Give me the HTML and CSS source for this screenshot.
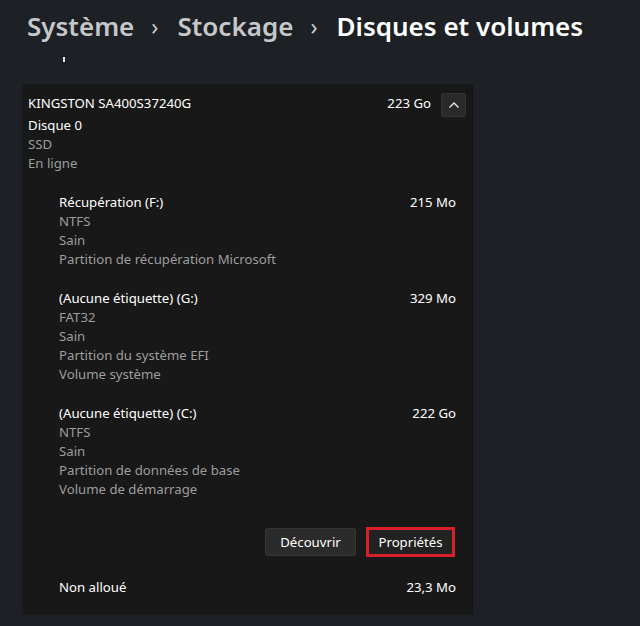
FILE: index.html
```html
<!DOCTYPE html>
<html lang="fr">
<head>
    <meta charset="UTF-8">
    <title>Disques et volumes</title>
    <link rel="stylesheet" href="styles.css">
</head>
<body>
<div class="crumbs">
    <span class="crumb">Système</span>
    <span class="sep">&#8250;</span>
    <span class="crumb">Stockage</span>
    <span class="sep">&#8250;</span>
    <span class="crumb current">Disques et volumes</span>
</div>
<div class="scroll-edge"><span class="tick"></span></div>

<div class="disk">
    <div class="disk-head">
        <span class="name">KINGSTON SA400S37240G</span>
        <span class="size">223 Go</span>
        <button class="toggle" aria-label="Réduire">
            <svg width="12" height="8" viewBox="0 0 12 8"><path d="M1.5 6.5 L6 2 L10.5 6.5" fill="none" stroke="#e8e8e8" stroke-width="1.4"/></svg>
        </button>
    </div>
    <div class="line strong">Disque 0</div>
    <div class="line muted">SSD</div>
    <div class="line muted">En ligne</div>

    <div class="volume">
        <div class="vol-head"><span>Récupération (F:)</span><span>215 Mo</span></div>
        <div class="line muted">NTFS</div>
        <div class="line muted">Sain</div>
        <div class="line muted">Partition de récupération Microsoft</div>
    </div>

    <div class="volume">
        <div class="vol-head"><span>(Aucune étiquette) (G:)</span><span>329 Mo</span></div>
        <div class="line muted">FAT32</div>
        <div class="line muted">Sain</div>
        <div class="line muted">Partition du système EFI</div>
        <div class="line muted">Volume système</div>
    </div>

    <div class="volume">
        <div class="vol-head"><span>(Aucune étiquette) (C:)</span><span>222 Go</span></div>
        <div class="line muted">NTFS</div>
        <div class="line muted">Sain</div>
        <div class="line muted">Partition de données de base</div>
        <div class="line muted">Volume de démarrage</div>
    </div>

    <div class="actions">
        <button class="btn">Découvrir</button>
        <button class="btn marked">Propriétés</button>
    </div>

    <div class="volume last">
        <div class="vol-head"><span>Non alloué</span><span>23,3 Mo</span></div>
    </div>
</div>
</body>
</html>
```

FILE: styles.css
```css
body {
    margin: 0;
    background-color: #1d2125;
    font-family: "Noto Sans", "Open Sans", sans-serif;
    font-size: 13.2px;
    color: #ffffff;
    overflow: hidden;
}

.crumbs {
    display: flex;
    align-items: center;
    padding: 6px 0 0 27px;
    height: 40px;
    font-size: 26px;
    font-weight: 600;
    color: #c5c7c9;
}

.sep {
    font-size: 23px;
    font-weight: 400;
    margin: 0 19px 0 17px;
    color: #c5c7c9;
}

.current {
    color: #ffffff;
}

.scroll-edge {
    height: 27px;
    padding: 11px 0 0 63px;
}

.tick {
    display: block;
    width: 2px;
    height: 5px;
    background-color: #e8e8e8;
}

.disk {
    margin-left: 22px;
    width: 438px;
    padding: 8px 6px 17px 5px;
    background-color: #181818;
    border: 1px solid #1c1c1c;
    border-right-color: #151515;
}

.disk-head {
    display: flex;
    align-items: flex-start;
    height: 23px;
}

.disk-head .name {
    flex: 1;
    line-height: 19px;
    margin-top: 1px;
}

.disk-head .size {
    line-height: 19px;
    margin-top: 1px;
    margin-right: 10px;
}

.toggle {
    width: 25px;
    height: 24px;
    padding: 0;
    display: flex;
    align-items: center;
    justify-content: center;
    background-color: #2a2a2a;
    border: 1px solid #333333;
    border-radius: 2px;
}

.line {
    line-height: 19px;
}

.strong {
    color: #ffffff;
}

.muted {
    color: #9d9d9d;
}

.volume {
    margin: 20px 10px 0 31px;
}

.vol-head {
    display: flex;
    justify-content: space-between;
    line-height: 19px;
}

.actions {
    display: flex;
    justify-content: flex-end;
    gap: 10px;
    margin: 28px 11px 0 0;
}

.btn {
    box-sizing: border-box;
    width: 91px;
    font-family: inherit;
    font-size: 13.2px;
    color: #ffffff;
    background-color: #2b2b2b;
    border: 1px solid #353535;
    border-radius: 2px;
    height: 28px;
    padding: 0;
    margin-top: 1px;
}

.btn.marked {
    width: 89px;
    margin-top: 0;
    height: 30px;
    border: 3px solid #d9202a;
    border-radius: 0;
    background-color: #222222;
}

.volume.last {
    margin-top: 21px;
}
```
